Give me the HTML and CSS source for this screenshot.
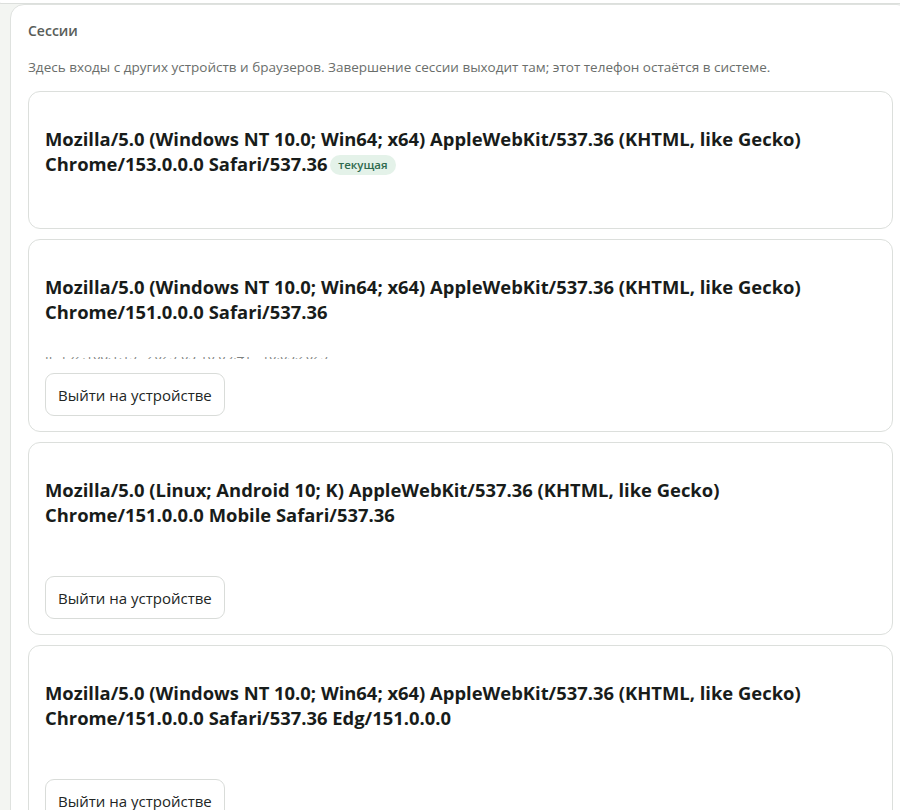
FILE: index.html
```html
<!DOCTYPE html>
<html lang="ru">
<head>
<meta charset="utf-8">
<title>Сессии</title>
<link rel="stylesheet" href="styles.css">
</head>
<body>
<div class="page">
  <div class="prev-card"></div>
  <section class="panel">
    <h2 class="panel-title">Сессии</h2>
    <p class="panel-desc">Здесь входы с других устройств и браузеров. Завершение сессии выходит там; этот телефон остаётся в системе.</p>
    <div class="sessions">
      <article class="session">
        <div class="session-top"></div>
        <h3 class="session-name">Mozilla/5.0 (Windows NT 10.0; Win64; x64) AppleWebKit/537.36 (KHTML, like Gecko) Chrome/153.0.0.0 Safari/537.36 <span class="badge">текущая</span></h3>
        <div class="session-meta"></div>
      </article>
      <article class="session">
        <div class="session-top"></div>
        <h3 class="session-name">Mozilla/5.0 (Windows NT 10.0; Win64; x64) AppleWebKit/537.36 (KHTML, like Gecko) Chrome/151.0.0.0 Safari/537.36</h3>
        <div class="session-meta"><div class="meta-peek"><span class="meta-text">IP 192.168.1.15 · 2025-03-10 09:41 · 10.03.2025</span></div></div>
        <div class="session-actions"><button class="btn">Выйти на устройстве</button></div>
      </article>
      <article class="session">
        <div class="session-top"></div>
        <h3 class="session-name">Mozilla/5.0 (Linux; Android 10; K) AppleWebKit/537.36 (KHTML, like Gecko) Chrome/151.0.0.0 Mobile Safari/537.36</h3>
        <div class="session-meta"></div>
        <div class="session-actions"><button class="btn">Выйти на устройстве</button></div>
      </article>
      <article class="session">
        <div class="session-top"></div>
        <h3 class="session-name">Mozilla/5.0 (Windows NT 10.0; Win64; x64) AppleWebKit/537.36 (KHTML, like Gecko) Chrome/151.0.0.0 Safari/537.36 Edg/151.0.0.0</h3>
        <div class="session-meta"></div>
        <div class="session-actions"><button class="btn">Выйти на устройстве</button></div>
      </article>
    </div>
  </section>
</div>
</body>
</html>
```
FILE: styles.css
```css
html, body {
  margin: 0;
  padding: 0;
}
body {
  background: #f3f5f2;
  font-family: "Open Sans", "Noto Sans", sans-serif;
  color: #1d211f;
  overflow: hidden;
}
.page {
  padding-left: 10px;
  width: 910px;
}
.prev-card {
  height: 3px;
  margin-left: -12px;
  background: #fff;
  border: 1px solid #dcdfdc;
  border-top: none;
  border-radius: 0 0 12px 12px;
}
.panel {
  background: #fff;
  border: 1px solid #dfe2df;
  border-radius: 14px;
  padding: 0 17px 20px 17px;
  width: 865px;
}
.panel-title {
  margin: 0;
  padding-top: 16px;
  font-size: 14px;
  line-height: 20px;
  font-weight: 600;
  color: #585d59;
}
.panel-desc {
  margin: 17px 0 0 0;
  font-size: 13.5px;
  line-height: 18px;
  color: #6a6e6b;
}
.sessions {
  margin-top: 15px;
  display: flex;
  flex-direction: column;
  gap: 10px;
}
.session {
  border: 1px solid #dcdfdc;
  border-radius: 12px;
  padding: 16px 16px 13px 16px;
  background: #fff;
}
.session-top {
  height: 18px;
}
.session-name {
  margin: 0;
  font-size: 18.4px;
  line-height: 25px;
  font-weight: 700;
  color: #181c1a;
}
.badge {
  display: inline-block;
  vertical-align: 2px;
  margin-left: -2px;
  font-size: 11.5px;
  line-height: 20px;
  padding: 0 8px;
  border-radius: 10px;
  background: #e4f2e9;
  color: #2f6a4e;
  font-weight: 600;
}
.session-meta {
  height: 39px;
  position: relative;
}
.meta-peek {
  position: absolute;
  left: 0;
  top: 33px;
  height: 2px;
  overflow: hidden;
}
.meta-text {
  display: block;
  margin-top: -9px;
  font-size: 13px;
  line-height: 14px;
  color: #7d817e;
  white-space: nowrap;
}
.session-actions {
  padding-top: 10px;
  margin-bottom: 2px;
}
.btn {
  font-family: inherit;
  font-size: 15px;
  color: #222624;
  background: #fff;
  border: 1px solid #d9dcd9;
  border-radius: 9px;
  height: 43px;
  padding: 0 12px;
  cursor: pointer;
}
```
